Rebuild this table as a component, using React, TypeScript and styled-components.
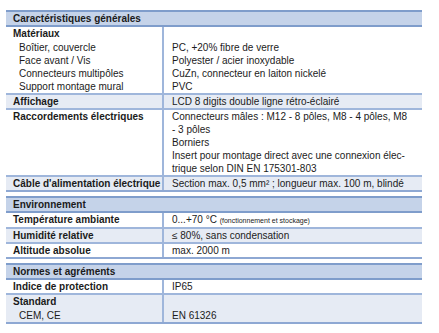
import React from "react";
import styled, { createGlobalStyle } from "styled-components";

const Global = createGlobalStyle`
  html, body { margin: 0; padding: 0; background: #ffffff; }
  body { font-family: "Liberation Sans", Arial, sans-serif; color: #1b1b1b; }
`;

const Page = styled.div`
  padding: 10px 0 0 6px;
`;

const Sheet = styled.div`
  width: 416px;
  display: flex;
  flex-direction: column;
  gap: 4px;
`;

const Section = styled.section`
  display: flex;
  flex-direction: column;
  border-bottom: 2px solid #8ea8d3;
`;

const Header = styled.div`
  background: #c5d3e9;
  border-top: 2px solid #7f9dcb;
  border-bottom: 2px solid #7f9dcb;
  padding: 0 7px;
  font-size: 10px;
  font-weight: bold;
  line-height: 13px;
`;

const Row = styled.div<{ $alt?: boolean; $first?: boolean }>`
  display: grid;
  grid-template-columns: 158px 1fr;
  background: ${(p) => (p.$alt ? "#e6ebf4" : "#ffffff")};
  border-top: ${(p) => (p.$first ? "none" : "2px solid #9fb6db")};
  font-size: 10px;
  line-height: 13px;
`;

const Label = styled.div`
  padding: 0 2px 0 7px;
  border-right: 2px solid #9fb6db;
  font-weight: bold;
  white-space: nowrap;
`;

const Title = styled.div`
  margin-bottom: 1px;
`;

const SubLabel = styled.div`
  font-weight: normal;
  padding-left: 6px;
`;

const Value = styled.div`
  padding: 0 8px;
`;

const Line = styled.div``;

const Small = styled.span`
  font-size: 7px;
`;

export default function App() {
  return (
    <>
      <Global />
      <Page>
        <Sheet>
          <Section>
            <Header>Caractéristiques générales</Header>
            <Row $first>
              <Label>
                <Title>Matériaux</Title>
                <SubLabel>Boîtier, couvercle</SubLabel>
                <SubLabel>Face avant / Vis</SubLabel>
                <SubLabel>Connecteurs multipôles</SubLabel>
                <SubLabel>Support montage mural</SubLabel>
              </Label>
              <Value>
                <Title>&nbsp;</Title>
                <Line>PC, +20% fibre de verre</Line>
                <Line>Polyester / acier inoxydable</Line>
                <Line>CuZn, connecteur en laiton nickelé</Line>
                <Line>PVC</Line>
              </Value>
            </Row>
            <Row $alt>
              <Label>Affichage</Label>
              <Value>LCD 8 digits double ligne rétro-éclairé</Value>
            </Row>
            <Row>
              <Label>Raccordements électriques</Label>
              <Value>
                <Line>Connecteurs mâles : M12 - 8 pôles, M8 - 4 pôles, M8</Line>
                <Line>- 3 pôles</Line>
                <Line>Borniers</Line>
                <Line>Insert pour montage direct avec une connexion élec-</Line>
                <Line>trique selon DIN EN 175301-803</Line>
              </Value>
            </Row>
            <Row $alt>
              <Label>Câble d'alimentation électrique</Label>
              <Value>Section max. 0,5 mm² ; longueur max. 100 m, blindé</Value>
            </Row>
          </Section>

          <Section>
            <Header>Environnement</Header>
            <Row $first>
              <Label>Température ambiante</Label>
              <Value>
                0...+70 °C <Small>(fonctionnement et stockage)</Small>
              </Value>
            </Row>
            <Row $alt>
              <Label>Humidité relative</Label>
              <Value>≤ 80%, sans condensation</Value>
            </Row>
            <Row>
              <Label>Altitude absolue</Label>
              <Value>max. 2000 m</Value>
            </Row>
          </Section>

          <Section>
            <Header>Normes et agréments</Header>
            <Row $first>
              <Label>Indice de protection</Label>
              <Value>IP65</Value>
            </Row>
            <Row $alt>
              <Label>
                <Title>Standard</Title>
                <SubLabel>CEM, CE</SubLabel>
              </Label>
              <Value>
                <Title>&nbsp;</Title>
                <Line>EN 61326</Line>
              </Value>
            </Row>
          </Section>
        </Sheet>
      </Page>
    </>
  );
}
